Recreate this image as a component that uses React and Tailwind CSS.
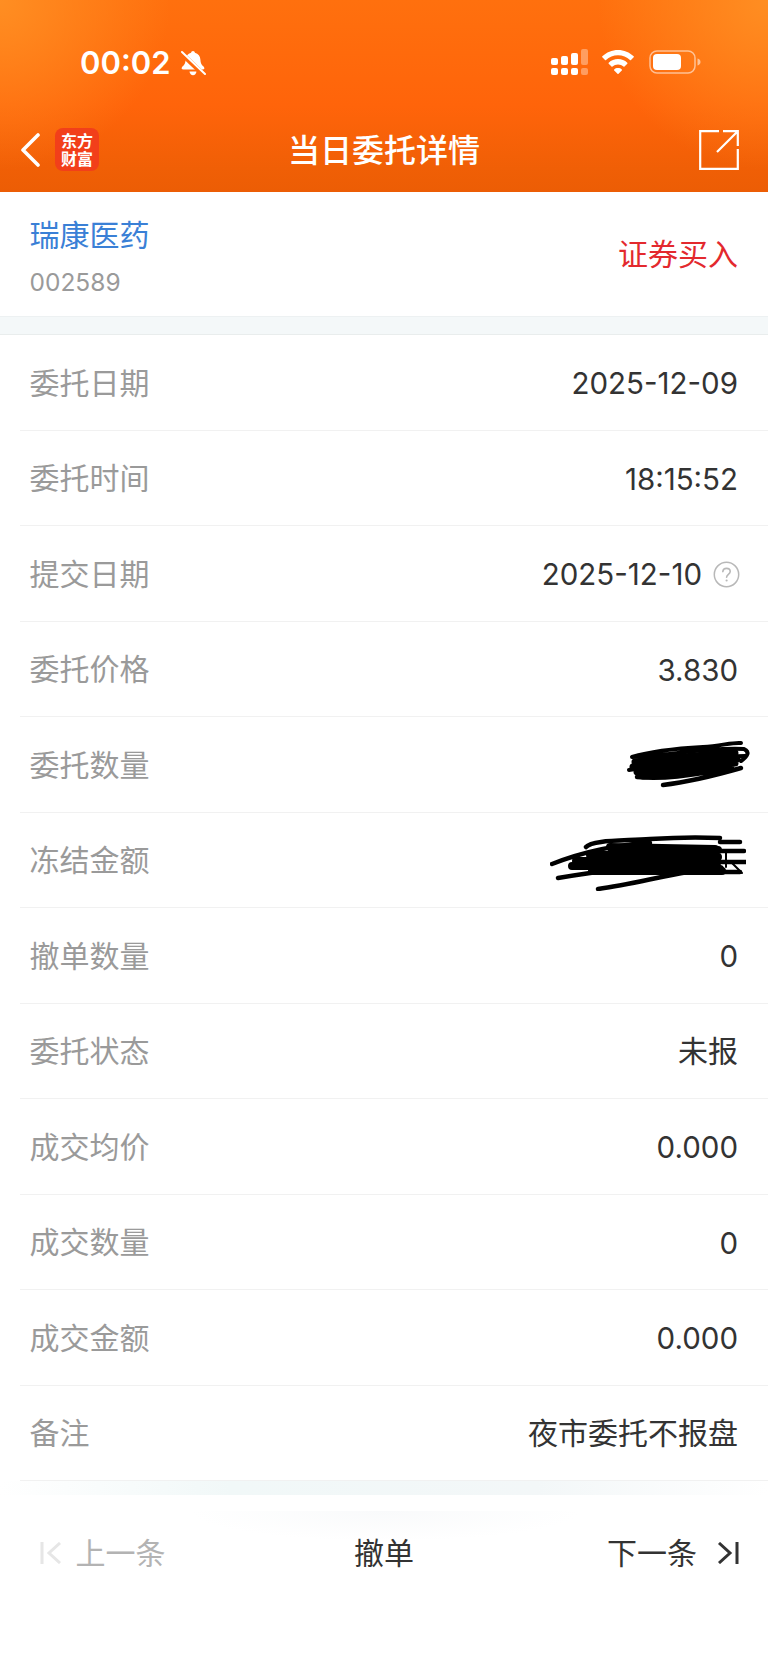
import React from 'react';

const rows = [
  { label: '委托日期', value: '2025-12-09' },
  { label: '委托时间', value: '18:15:52' },
  { label: '提交日期', value: '2025-12-10', help: true },
  { label: '委托价格', value: '3.830' },
  { label: '委托数量', scribble: 'small' },
  { label: '冻结金额', scribble: 'large' },
  { label: '撤单数量', value: '0' },
  { label: '委托状态', value: '未报', cjk: true },
  { label: '成交均价', value: '0.000' },
  { label: '成交数量', value: '0' },
  { label: '成交金额', value: '0.000' },
  { label: '备注', value: '夜市委托不报盘', cjk: true },
];

function BellOff() {
  return (
    <svg width="26" height="27" viewBox="0 0 26 27" fill="white">
      <path d="M13 1c1 0 1.800.8 1.900 1.700 3.400.8 5.400 3.600 5.500 7 .1 3.500 1.200 5 2.900 6.600 1 1 1.200 1.900 1 2.400-.2.500-.8.700-1.600.7H3.300c-.8 0-1.400-.2-1.600-.7-.2-.5 0-1.400 1-2.400C4.400 14.700 5.500 13.200 5.600 9.700c.1-3.400 2.100-6.200 5.500-7C11.200 1.800 12 1 13 1z" />
      <path d="M9.500 21.500h7c-.3 2.200-1.700 3.700-3.500 3.700s-3.200-1.500-3.500-3.700z" />
      <path d="M1.500 3.500L24 25" stroke="#ff6a0c" strokeWidth="5" />
      <path d="M2 2l23 22" stroke="white" strokeWidth="2" strokeLinecap="round" />
    </svg>
  );
}

function Signal() {
  return (
    <svg width="37" height="26" viewBox="0 0 37 26" fill="white">
      <rect x="0" y="9" width="7" height="7" rx="2" />
      <rect x="10" y="7" width="7" height="9" rx="2" />
      <rect x="20" y="4" width="7" height="12" rx="2" />
      <rect x="30" y="0" width="7" height="16" rx="2" opacity="0.35" />
      <rect x="0" y="19" width="7" height="7" rx="2" />
      <rect x="10" y="19" width="7" height="7" rx="2" />
      <rect x="20" y="19" width="7" height="7" rx="2" />
      <rect x="30" y="19" width="7" height="7" rx="2" opacity="0.35" />
    </svg>
  );
}

function Wifi() {
  return (
    <svg width="32" height="24" viewBox="0 0 32 24" fill="white">
      <path d="M16 0c6 0 11.500 2.300 15.700 6.300.3.300.3.700 0 1l-2.700 2.800c-.3.300-.7.300-1 0C24.800 7 20.600 5.300 16 5.300S7.200 7 4 10.100c-.3.300-.7.300-1 0L.3 7.300c-.3-.3-.3-.7 0-1C4.500 2.300 10 0 16 0z" />
      <path d="M16 9c3.500 0 6.800 1.300 9.300 3.700.3.300.3.700 0 1l-2.800 2.800c-.3.300-.7.300-1 0-1.500-1.400-3.400-2.100-5.500-2.100s-4 .7-5.500 2.100c-.3.300-.7.300-1 0l-2.800-2.800c-.3-.3-.3-.7 0-1C9.200 10.300 12.500 9 16 9z" />
      <path d="M16 18c1.500 0 2.800.5 3.800 1.400.3.300.3.700 0 1l-3.300 3.400c-.3.300-.7.300-1 0l-3.300-3.400c-.3-.3-.3-.7 0-1 1-.9 2.300-1.400 3.800-1.400z" />
    </svg>
  );
}

function Battery() {
  return (
    <svg width="52" height="24" viewBox="0 0 52 24" fill="none">
      <rect x="1" y="1" width="45" height="22" rx="7" stroke="white" strokeOpacity="0.55" strokeWidth="1.500" />
      <rect x="4" y="4" width="28" height="16" rx="4" fill="white" />
      <path d="M48.500 8.500c2 .6 3 1.900 3 3.500s-1 2.900-3 3.500z" fill="white" fillOpacity="0.55" />
    </svg>
  );
}

function Help() {
  return (
    <svg width="27" height="27" viewBox="0 0 27 27" fill="none" stroke="#b8b8b8">
      <circle cx="13.500" cy="13.500" r="12.200" strokeWidth="1.500" />
      <path d="M9.800 10.600c.2-2 1.700-3.200 3.700-3.200 2.100 0 3.700 1.300 3.700 3.100 0 2.700-3.600 2.900-3.600 5.700" strokeWidth="1.600" strokeLinecap="round" />
      <circle cx="13.600" cy="19.500" r="1.100" fill="#b8b8b8" stroke="none" />
    </svg>
  );
}

function ScribbleSmall() {
  return (
    <svg width="127" height="48" viewBox="0 0 127 48" fill="none" stroke="black" strokeLinecap="round" strokeLinejoin="round">
      <path d="M7 17C30 10 60 8 78 7s30-5 38-4M7 17c30 0 70-10 112-8 6 3 4 7-3 12" strokeWidth="4" />
      <path d="M4 30c30-4 75-13 116-14" strokeWidth="4" />
      <path d="M10 22c30-3 70-8 100-9M8 27c35-4 70-8 104-8M12 32c30-3 60-7 98-9M18 36c25-2 55-6 88-10" strokeWidth="7" />
      <path d="M38 45c25-3 50-9 78-17M12 37c30 3 60-3 90-8" strokeWidth="4.500" />
    </svg>
  );
}

function ScribbleLarge() {
  return (
    <svg width="196" height="56" viewBox="0 0 196 56" fill="none" stroke="black" strokeLinecap="round" strokeLinejoin="round">
      <path d="M36 12C42 5 70 6 100 4s50-2 70-1M170 7h20M2 29C30 18 60 10 100 8M150 16h44M160 27h36M8 43c30-5 60-10 100-13M48 54c30-4 60-12 90-17M120 37h70" strokeWidth="4.500" />
      <path d="M62 15h106M40 20h125M26 26h140M22 31h145M42 36h130" strokeWidth="8" />
      <path d="M60 12l105 2M50 22h118M70 34h100" strokeWidth="8" />
      <path d="M176 18v14M182 28l10 10" strokeWidth="2" />
    </svg>
  );
}

export default function App() {
  return (
    <div className="w-[768px] h-[1670px] bg-white font-['Inter','Noto_Sans_CJK_SC',sans-serif] overflow-hidden">
      {/* Header */}
      <header className="h-[192px] flex flex-col text-white bg-[radial-gradient(circle_at_0_0,#ff8e22_0,rgba(255,142,34,0)_170px),radial-gradient(circle_at_100%_0,#ff8e22_0,rgba(255,142,34,0)_170px),linear-gradient(180deg,#ff700e_0%,#ff640a_55%,#f05f06_88%,#ec5d05_100%)]">
        <div className="h-[128px] pt-[50px] pl-[80px] pr-[67px] flex items-start justify-between shrink-0">
          <div className="flex items-center gap-[9px] h-[26px]">
            <span className="text-[31px] leading-[26px] font-semibold">00:02</span>
            <BellOff />
          </div>
          <div className="flex items-center mt-[-1px]">
            <Signal />
            <span className="ml-[14px]"><Wifi /></span>
            <span className="ml-[15px]"><Battery /></span>
          </div>
        </div>
        <div className="relative flex-1 flex items-center justify-between pl-[20px] pr-[29px] pb-[21px]">
          <div className="flex items-center">
            <svg width="20" height="34" viewBox="0 0 20 34" fill="none" stroke="white" strokeWidth="3.600" strokeLinecap="round" strokeLinejoin="round">
              <path d="M18 2L3 17l15 15" />
            </svg>
            <div className="ml-[15px] w-[44px] h-[43px] rounded-[8px] bg-[#f23f1a] flex items-center justify-center text-center text-[16px] leading-[18px] font-bold text-white">
              东方<br />财富
            </div>
          </div>
          <h1 className="absolute left-0 right-0 top-0 text-center text-[32px] leading-[46px] font-medium">当日委托详情</h1>
          <svg width="40" height="40" viewBox="0 0 40 40" fill="none" stroke="white" strokeWidth="2.200">
            <path d="M20 1.200H1.200v37.600h37.600V19" />
            <path d="M39 1L18 22M24 1.200h14.800V16" />
          </svg>
        </div>
      </header>

      {/* Stock */}
      <section className="h-[125px] flex items-center justify-between pl-[29.500px] pr-[30px] border-b border-[#edf1f2]">
        <div>
          <div className="text-[30px] leading-[44px] text-[#3a80d6] mt-[1px]">瑞康医药</div>
          <div className="text-[24.500px] leading-[30px] text-[#9a9a9a] mt-[10px]">002589</div>
        </div>
        <div className="text-[30px] leading-[44px] text-[#e3292e]">证券买入</div>
      </section>
      <div className="h-[18px] bg-[#f4f8f9] border-b border-[#e9eded]" />

      {/* Detail rows */}
      <div className="ml-[20px]">
        {rows.map((row) => (
          <div key={row.label} className="h-[95.500px] pt-[2px] flex items-center justify-between pl-[9.500px] pr-[30px] border-b border-[#f1f1f1]">
            <span className="text-[30px] text-[#9a9a9a]">{row.label}</span>
            {row.scribble === 'small' && <span className="mr-[-14px] mt-[-3px]"><ScribbleSmall /></span>}
            {row.scribble === 'large' && <span className="mr-[-8px] mt-[4px]"><ScribbleLarge /></span>}
            {row.value && (
              <span className={row.cjk ? 'text-[30px] text-[#333333]' : 'flex items-center gap-[11px] text-[29.500px] text-[#333333]'}>
                {row.value}
                {row.help && <span className="mr-[-2px]"><Help /></span>}
              </span>
            )}
          </div>
        ))}
      </div>

      {/* Bottom bar */}
      <div className="h-[14px] bg-[linear-gradient(90deg,#ffffff_0%,#f1f8f8_30%,#f3f7f8_70%,#ffffff_100%)]" />
      <div className="relative h-[116px] grid grid-cols-[1fr_auto_1fr] items-start pt-[36px] px-[28px] text-[30px] leading-[44px]">
        <div className="absolute left-[190px] top-[16px] w-[390px] h-[30px] bg-[radial-gradient(ellipse_50%_100%_at_50%_0,#f9fafb_0%,#ffffff_100%)]" />
        <div className="relative flex items-center ml-[12px] text-[#b3b3b3]">
          <svg width="22" height="22" viewBox="0 0 22 22" fill="none" stroke="#e6e6e6" strokeWidth="3">
            <path d="M2 0v22M20 1L9 11l11 10" />
          </svg>
          <span className="ml-[13.500px]">上一条</span>
        </div>
        <span className="relative text-[#333333]">撤单</span>
        <div className="relative flex items-center justify-end text-[#333333]">
          <span>下一条</span>
          <svg className="ml-[20px] mr-[1px]" width="22" height="22" viewBox="0 0 22 22" fill="none" stroke="#333333" strokeWidth="3">
            <path d="M20 0v22M2 1l11 10L2 21" />
          </svg>
        </div>
      </div>
    </div>
  );
}
